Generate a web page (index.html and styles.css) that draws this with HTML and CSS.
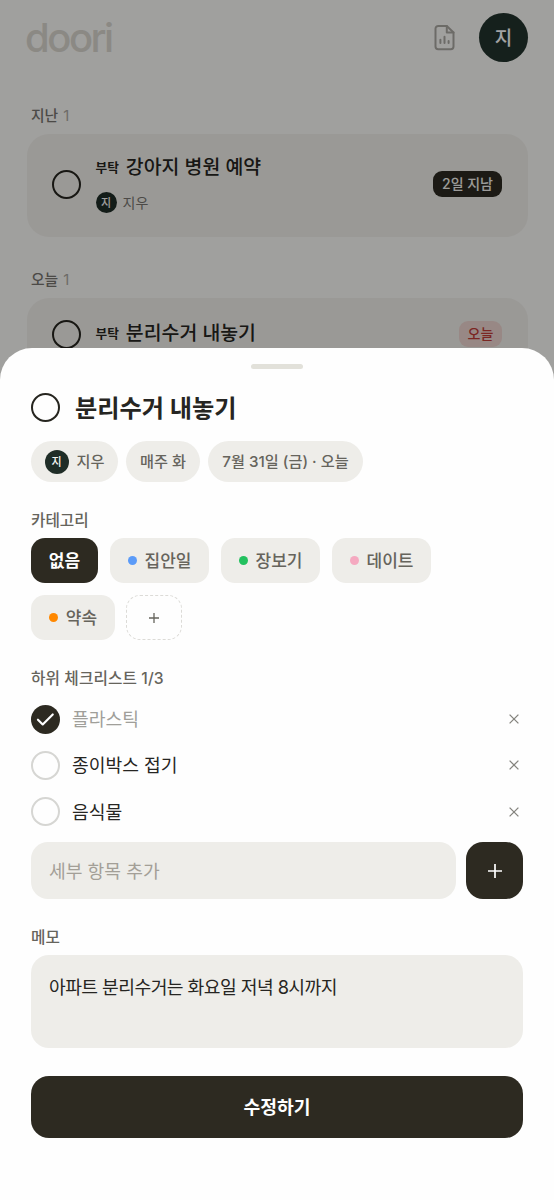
FILE: index.html
```html
<!DOCTYPE html>
<html lang="ko">
<head>
<meta charset="utf-8">
<title>doori</title>
<link rel="stylesheet" href="styles.css">
</head>
<body>
<div class="app">
  <header class="topbar">
    <div class="logo">doori</div>
    <div class="topbar-actions">
      <svg class="report" viewBox="0 0 21 27" fill="none" stroke="currentColor" stroke-width="2" stroke-linecap="round" stroke-linejoin="round">
        <path d="M12.8 2H4.2A2.7 2.7 0 0 0 1.5 4.7v17.8a2.7 2.7 0 0 0 2.7 2.7h12.6a2.7 2.7 0 0 0 2.7-2.7V8.5z"/>
        <path d="M12.8 2v6.5h6.7"/>
        <path d="M6.4 15.8v3.2M10.5 12.8v6.2M14.6 17v2"/>
      </svg>
      <div class="avatar avatar-lg">지</div>
    </div>
  </header>

  <h2 class="group-title">지난 <span>1</span></h2>
  <article class="task">
    <i class="ring"></i>
    <div class="task-body">
      <div class="task-title"><b>부탁</b><span>강아지 병원 예약</span></div>
      <div class="task-owner"><div class="avatar avatar-sm">지</div><span>지우</span></div>
    </div>
    <div class="badge badge-late">2일 지남</div>
  </article>

  <h2 class="group-title group-next">오늘 <span>1</span></h2>
  <article class="task task-short">
    <i class="ring"></i>
    <div class="task-body">
      <div class="task-title"><b>부탁</b><span>분리수거 내놓기</span></div>
    </div>
    <div class="badge badge-today">오늘</div>
  </article>
</div>

<div class="scrim"></div>

<section class="sheet">
  <div class="handle"></div>
  <div class="sheet-title"><i class="ring"></i><h1>분리수거 내놓기</h1></div>
  <div class="meta">
    <div class="pill pill-owner"><div class="avatar avatar-md">지</div>지우</div>
    <div class="pill pill-repeat">매주 화</div>
    <div class="pill pill-date">7월 31일 (금) · 오늘</div>
  </div>

  <h3 class="label">카테고리</h3>
  <div class="categories">
    <button class="cat cat-none">없음</button>
    <button class="cat"><i class="dot blue"></i>집안일</button>
    <button class="cat"><i class="dot green"></i>장보기</button>
    <button class="cat"><i class="dot pink"></i>데이트</button>
    <button class="cat cat-short"><i class="dot orange"></i>약속</button>
    <button class="cat-add"><svg viewBox="0 0 10 10"><path d="M5 0v10M0 5h10"/></svg></button>
  </div>

  <h3 class="label label-check">하위 체크리스트 1/3</h3>
  <ul class="checks">
    <li class="done"><i class="check"><svg viewBox="0 0 28 28"><path d="M6.7 14.2l4.6 4.6 9.7-9.7"/></svg></i><span>플라스틱</span><svg class="remove" viewBox="0 0 10 10"><path d="M.6.6l8.8 8.8M9.4.6L.6 9.4"/></svg></li>
    <li><i class="check"></i><span>종이박스 접기</span><svg class="remove" viewBox="0 0 10 10"><path d="M.6.6l8.8 8.8M9.4.6L.6 9.4"/></svg></li>
    <li><i class="check"></i><span>음식물</span><svg class="remove" viewBox="0 0 10 10"><path d="M.6.6l8.8 8.8M9.4.6L.6 9.4"/></svg></li>
  </ul>
  <div class="add-row">
    <div class="field">세부 항목 추가</div>
    <button class="add"><svg viewBox="0 0 14 14"><path d="M7 0v14M0 7h14"/></svg></button>
  </div>

  <h3 class="label label-memo">메모</h3>
  <div class="memo">아파트 분리수거는 화요일 저녁 8시까지</div>
  <button class="submit">수정하기</button>
</section>
</body>
</html>
```

FILE: styles.css
```css
* { box-sizing: border-box; }
body {
  margin: 0;
  position: relative;
  width: 554px;
  height: 1200px;
  overflow: hidden;
  background: #fbfaf8;
  color: #262522;
  font-family: Inter, "Noto Sans CJK KR", sans-serif;
  white-space: nowrap;
}
h1, h2, h3, ul { margin: 0; padding: 0; font-weight: 500; list-style: none; }
button { border: 0; padding: 0; font: inherit; color: inherit; }
svg { display: block; }

.app { padding: 13px 26px 0 27px; }
.topbar { display: flex; justify-content: space-between; align-items: center; height: 49px; }
.logo {
  margin-left: -2px;
  font: 500 40px/49px Inter, sans-serif;
  letter-spacing: -2.5px;
  color: #d9d7cf;
}
.topbar-actions { display: flex; align-items: center; gap: 24px; }
.report { width: 21px; height: 27px; color: #aaa8a2; }

.avatar {
  display: flex;
  align-items: center;
  justify-content: center;
  border-radius: 50%;
  background: #1f2d27;
  color: #f5f5f2;
  font-weight: 500;
  line-height: 1;
}
.avatar-lg { width: 49px; height: 49px; padding-top: 1px; font-size: 19px; color: #fff; background: #22332c; }
.avatar-md { width: 24px; height: 24px; padding-top: 1px; font-size: 11px; }
.avatar-sm { width: 21px; height: 21px; padding-top: 1px; font-size: 11px; }

.group-title {
  margin: 42px 0 0 4px;
  padding-top: 1px;
  height: 30px;
  font-size: 14.8px;
  line-height: 22px;
  color: #77756f;
}
.group-title span { color: #aaa8a2; font-weight: 400; margin-left: 1px; }
.group-next { margin-top: 31px; }

.task {
  display: flex;
  align-items: center;
  height: 103px;
  padding: 0 26px 3px 24.5px;
  border-radius: 22px;
  background: #f1f0eb;
}
.task-short { height: 76px; }
.ring {
  flex: none;
  width: 29px;
  height: 29px;
  border: 2px solid #26251f;
  border-radius: 50%;
}
.task-body { flex: 1; margin: -2px 0 0 15px; }
.task-title { display: flex; align-items: center; gap: 7px; height: 29px; font-size: 19.4px; font-weight: 500; line-height: 29px; }
.task-title b { font-size: 12.7px; font-weight: 700; }
.task-owner { display: flex; align-items: center; gap: 6px; height: 21px; margin-top: 10px; font-size: 14px; line-height: 19px; color: #77756f; }
.badge { display: flex; align-items: center; justify-content: center; height: 26px; border-radius: 9px; font-size: 14px; font-weight: 500; line-height: 1; }
.badge-late { width: 69px; background: #2d2a21; color: #f4f3ef; }
.badge-today { width: 43px; margin-top: -2px; background: #eed5d0; color: #c13d38; }

.scrim { position: absolute; inset: 0; background: rgba(0, 0, 0, .36); }

.sheet {
  position: absolute;
  left: 0;
  right: 0;
  bottom: 0;
  height: 852px;
  padding: 16px 31px 0;
  border-radius: 32px 32px 0 0;
  background: #fefefe;
}
.handle { width: 52px; height: 5px; margin: 0 auto; border-radius: 3px; background: #e2e1da; }
.sheet-title { display: flex; align-items: center; gap: 15px; height: 36px; margin-top: 20.5px; }
.sheet-title h1 { font-size: 24.2px; line-height: 36px; font-weight: 700; padding-top: 2px; }

.meta { display: flex; gap: 8px; margin-top: 15.5px; }
.pill { display: flex; align-items: center; justify-content: center; height: 41px; border-radius: 21px; background: #eeede9; color: #66645c; font-size: 15.2px; font-weight: 500; line-height: 1; }
.pill-owner { width: 87px; gap: 8px; }
.pill-repeat { width: 74px; }
.pill-date { width: 155px; }

.label { height: 22px; margin-top: 28px; font-size: 15.7px; line-height: 22px; color: #66645c; }
.categories { display: flex; flex-wrap: wrap; gap: 12px; margin-top: 6px; }
.cat { display: flex; align-items: center; justify-content: center; gap: 8px; width: 99px; height: 45px; padding-top: 1px; border-radius: 14px; background: #eeede9; color: #66645c; font-size: 17px; font-weight: 500; line-height: 1; }
.cat-none { width: 67px; background: #2d2a21; color: #fff; font-weight: 700; }
.cat-short { width: 84px; }
.dot { width: 9px; height: 9px; margin-top: -1px; border-radius: 50%; }
.blue { background: #5b9bf8; }
.green { background: #23c15f; }
.pink { background: #f5a9c0; }
.orange { background: #ff8800; }
.cat-add { display: flex; align-items: center; justify-content: center; width: 56px; height: 45px; margin-left: -1px; border: 1.3px dashed #dcdbd7; border-radius: 14px; background: none; }
.cat-add svg { width: 10px; height: 10px; stroke: #66645c; stroke-width: 1.3; }

.label-check { margin-top: 28px; letter-spacing: .1px; }
.checks { margin-top: 6px; }
.checks li { display: flex; align-items: center; height: 46.3px; font-size: 18.2px; font-weight: 400; line-height: 1; }
.checks span { flex: 1; margin-left: 12px; }
.check { width: 29px; height: 29px; border: 2.4px solid #d6d6d3; border-radius: 50%; }
.done { color: #a09f9a; }
.done .check { border: 0; background: #2d2a21; }
.done .check svg { fill: none; stroke: #fff; stroke-width: 2.1; stroke-linecap: round; stroke-linejoin: round; }
.remove { width: 10px; height: 10px; margin-right: 4px; stroke: #85847e; stroke-width: 1.3; }

.add-row { display: flex; gap: 10px; margin-top: 7.6px; }
.field { flex: 1; height: 56.5px; padding-left: 18px; border-radius: 17px; background: #eeede9; color: #a39f97; font-size: 18.2px; line-height: 58px; }
.add { display: flex; align-items: center; justify-content: center; width: 57px; height: 56.5px; border-radius: 17px; background: #2d2a21; }
.add svg { width: 14px; height: 14px; stroke: #fff; stroke-width: 1.7; }

.label-memo { margin-top: 28px; }
.memo { height: 93px; margin-top: 6px; padding: 19px 18px; border-radius: 18px; background: #eeede9; font-size: 18.2px; line-height: 27px; letter-spacing: -.55px; }
.submit { display: block; width: 100%; height: 62px; padding-top: 1px; margin-top: 28px; border-radius: 18px; background: #2d2a21; color: #fff; font-size: 18.2px; font-weight: 700; line-height: 61px; }
```
